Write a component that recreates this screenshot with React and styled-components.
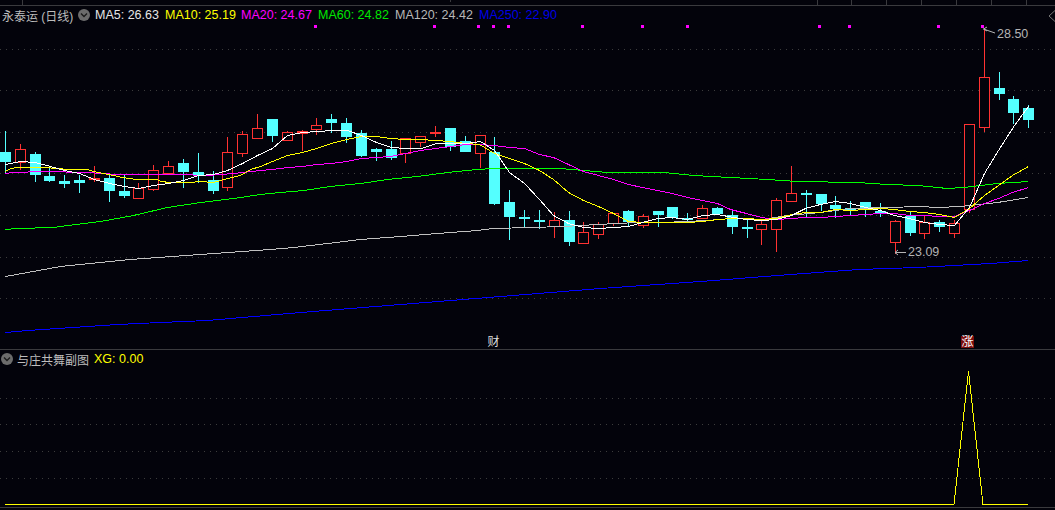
import React from "react";
import styled, { createGlobalStyle } from "styled-components";

const Global = createGlobalStyle`
  html, body { margin: 0; padding: 0; background: #03030b; overflow: hidden; }
`;

const UI_FONT = `"Liberation Sans", "Noto Sans CJK SC", sans-serif`;

const Screen = styled.div`
  width: 1055px;
  height: 510px;
  display: flex;
  flex-direction: column;
  background: #03030b;
  font-family: ${UI_FONT};
  overflow: hidden;
`;

const TopStrip = styled.div`
  height: 5px;
  flex: none;
  display: flex;
  border-bottom: 1px solid #3a3a3e;
`;

const Tick = styled.span`
  width: 1px;
  height: ${(p) => p.$h}px;
  flex: none;
  margin-left: ${(p) => p.$gap}px;
  background: #3a3a3e;
`;

const Panel = styled.section`
  flex: none;
  height: ${(p) => p.$h}px;
  display: flex;
  flex-direction: column;
  position: relative;
`;

const SubPanel = styled(Panel)`
  border-top: 1px solid #3a3a3e;
  border-bottom: 1px solid #3a3a3e;
`;

const Legend = styled.div`
  flex: none;
  height: ${(p) => p.$h}px;
  display: flex;
  align-items: center;
  padding-left: ${(p) => p.$pad}px;
  font-size: 12.5px;
  white-space: nowrap;
`;

const Title = styled.span`
  color: #bdbdbd;
  width: ${(p) => p.$w}px;
  flex: none;
  font-size: 12px;
`;

const Chevron = styled.span`
  width: 12px;
  height: 12px;
  flex: none;
  border-radius: 50%;
  background: #6c6c6c;
  display: flex;
  align-items: center;
  justify-content: center;
  margin-right: ${(p) => p.$mr}px;
`;

const Indicator = styled.span`
  color: ${(p) => p.$c};
  width: ${(p) => p.$w}px;
  flex: none;
`;

const Chart = styled.svg`
  display: block;
  flex: 1;
  width: 1055px;
  min-height: 0;
`;

const Diamond = styled.svg`
  position: absolute;
  right: 0;
  top: 4px;
`;

const PriceTag = styled.span`
  position: absolute;
  left: ${(p) => p.$x}px;
  top: ${(p) => p.$y}px;
  color: #b4b4b4;
  font-size: 12.5px;
  line-height: 15px;
`;

const Marker = styled.span`
  position: absolute;
  left: ${(p) => p.$x}px;
  top: 330px;
  width: 13px;
  height: 12px;
  line-height: 12px;
  text-align: center;
  font-size: 12px;
  color: ${(p) => (p.$alert ? "#ffffff" : "#dcdcdc")};
  background: ${(p) => (p.$alert ? "#7c0d0d" : "transparent")};
`;

const CYAN = "#54ffff";
const RED = "#ff3232";

/* top, bottom, high, low, up */
const candles = [
  [152,162,131,173,0],[149,162,144,170,1],[154,175,152,182,0],[176,181,167,182,0],[181,184,175,188,0],
  [180,183,175,193,0],[178,180,166,182,1],[178,191,174,202,0],[191,196,174,198,0],[188,198,183,198,1],
  [170,189,165,191,1],[166,173,161,175,1],[163,172,159,188,0],[172,175,153,183,0],[180,191,171,194,0],
  [152,187,137,191,1],[134,153,131,157,1],[128,138,114,138,1],[119,136,119,142,0],[132,140,131,141,1],
  [131,134,130,151,1],[125,129,118,135,1],[119,123,114,133,0],[123,137,118,143,0],[133,156,130,157,0],
  [149,152,148,161,0],[149,158,141,160,0],[138,153,138,163,1],[136,142,136,147,1],[132,134,126,137,1],
  [128,147,128,151,0],[141,152,136,152,0],[135,153,135,168,1],[152,204,137,205,0],[202,217,190,240,0],
  [217,219,210,228,0],[220,221,210,229,0],[220,226,212,238,1],[220,242,211,246,0],[232,243,222,243,1],
  [224,234,222,239,1],[213,223,213,226,1],[211,222,210,227,0],[216,225,214,228,1],[211,215,211,227,0],
  [207,218,207,219,0],[218,219,213,221,0],[208,218,205,219,1],[208,214,207,214,0],[215,227,210,234,0],
  [227,228,220,238,0],[224,229,220,245,1],[200,229,198,252,1],[193,201,166,201,1],[193,194,190,217,0],
  [194,204,194,211,0],[205,209,196,218,0],[208,210,201,215,0],[202,210,202,217,0],[211,212,203,217,0],
  [221,242,220,254,1],[216,233,212,236,0],[222,233,215,239,1],[222,227,220,232,0],[223,233,220,238,1],
  [124,209,124,213,1],[77,127,28,132,1],[88,94,72,100,0],[99,113,96,124,0],[108,120,105,128,0],
];

const ma5 = "5,164 20,161 35,162 50,166 64,170 79,173 94,179 109,183 124,186 138,188 153,185 168,183 183,180 198,175 213,174 227,170 242,163 257,155 272,148 287,135 302,132 317,131 332,130 347,130 361,135 376,142 391,147 406,148 421,148 436,143 451,143 466,143 480,141 494,150 509,172 524,183 539,199 553,215 568,223 583,227 598,228 613,227 628,226 642,222 657,218 672,217 687,219 702,215 717,214 733,217 746,219 761,220 776,219 791,215 805,208 820,204 835,201 850,203 865,207 880,210 894,215 909,218 924,222 939,224 954,225 969,207 984,173 998,150 1014,125 1028,106";
const ma10 = "5,171 10,168 18,167 43,167 57,168 68,169 87,169 93,171 103,173 113,175 122,177 128,178 137,179 157,179 160,181 170,182 190,182 200,181 213,182 227,178 240,175 250,169 260,166 272,161 287,155 302,152 316,148 331,143 346,139 361,136 376,136 390,138 405,139 420,139 435,140 450,141 465,143 479,144 494,153 509,158 524,163 539,170 553,179 568,192 583,200 598,206 613,213 628,221 642,222 657,222 672,222 687,222 702,221 717,219 733,218 746,218 761,219 776,218 791,214 805,212 820,212 835,209 850,210 865,209 880,208 894,209 909,211 924,212 939,214 954,217 969,208 984,195 998,185 1012,175 1028,166";
const ma20 = "5,173 13,172 43,171 87,172 117,174 147,174 177,174 207,175 233,173 260,170 272,169 287,167 302,166 316,164 331,163 346,161 361,158 376,157 390,156 405,153 420,150 435,148 450,146 465,144 479,144 494,145 509,147 524,148 539,154 553,157 568,164 583,171 598,175 613,179 628,184 642,187 657,190 672,193 687,197 702,200 717,203 730,209 746,213 761,217 776,219 791,218 805,217 820,217 835,216 850,215 865,214 880,213 894,213 909,215 924,215 939,216 954,216 969,210 984,203 998,198 1012,192 1028,187";
const ma60 = "5,229 17,228 53,227 67,225 100,221 133,215 167,207 200,202 233,198 260,194 280,192 303,190 330,186 360,183 387,179 417,176 447,172 477,169 493,168 560,168 607,172 663,172 693,175 730,177 767,179 797,181 857,182 887,184 917,185 947,188 963,187 997,183 1028,181";
const ma120 = "5,276 60,266 130,259 200,254 270,249 293,247 327,243 360,239 400,236 437,233 477,230 493,228 530,227 563,226 597,224 637,222 663,222 707,220 730,218 763,219 787,215 820,212 850,208 887,207 920,206 937,207 960,206 997,202 1028,197";
const ma250 = "5,332 27,330 57,328 87,326 117,324 160,322 207,320 300,312 400,304 500,296 600,288 700,281 790,274 858,269 917,267 990,263 1028,260";

const mainGrid = [49, 90, 132, 173, 215, 257, 298];
const subGrid = [398, 424, 451, 478];
const dots = [315, 434, 478, 493, 508, 582, 642, 687, 819, 849, 938, 982];

const lines = [
  [ma120, "#c0c0c0"],
  [ma250, "#0000ff"],
  [ma60, "#00ff00"],
  [ma20, "#ff00ff"],
  [ma10, "#ffff00"],
  [ma5, "#ffffff"],
];

const indicators = [
  ["MA5: 26.63", "#e6e6e6", 70],
  ["MA10: 25.19", "#ffff00", 76],
  ["MA20: 24.67", "#ff00ff", 77],
  ["MA60: 24.82", "#00e800", 77],
  ["MA120: 24.42", "#b8b8b8", 84],
  ["MA250: 22.90", "#0000e6", 90],
];

/* gap before each tick, its height */
const ticks = [[22, 5], [427, 2], [366, 5], [33, 5], [34, 5], [34, 5], [34, 5], [34, 5], [34, 5]];

const ChevronIcon = () => (
  <svg width="8" height="6" viewBox="0 0 8 6" fill="none">
    <path d="M1 1.5 L4 4.5 L7 1.5" stroke="#1c1c1c" strokeWidth="1.4" />
  </svg>
);

const Candle = ({ d, i }) => {
  const [top, bottom, high, low, up] = d;
  const x = Math.round(5 + i * 14.83);
  const c = up ? RED : CYAN;
  return (
    <g shapeRendering="crispEdges">
      <line x1={x + 0.5} x2={x + 0.5} y1={high} y2={low} stroke={c} />
      {up && bottom - top > 3 ? (
        <rect x={x - 5 + 0.5} y={top + 0.5} width={10} height={bottom - top} fill="#03030b" stroke={c} />
      ) : (
        <rect x={x - 5} y={top} width={11} height={Math.max(bottom - top, 2)} fill={c} />
      )}
    </g>
  );
};

export default function App() {
  return (
    <Screen>
      <Global />
      <TopStrip>
        {ticks.map(([gap, h], k) => (
          <Tick key={k} $gap={gap} $h={h} />
        ))}
      </TopStrip>
      <Panel $h={343}>
        <Legend $h={18} $pad={2}>
          <Title $w={76}>永泰运 (日线)</Title>
          <Chevron $mr={5}>
            <ChevronIcon />
          </Chevron>
          {indicators.map(([t, c, w]) => (
            <Indicator key={t} $c={c} $w={w}>
              {t}
            </Indicator>
          ))}
        </Legend>
        <Chart viewBox="0 24 1055 325" preserveAspectRatio="none">
          {mainGrid.map((y) => (
            <line key={y} x1="0" x2="1055" y1={y + 0.5} y2={y + 0.5} stroke="#3c3c3c" strokeDasharray="1 5" />
          ))}
          {dots.map((x) => (
            <rect key={x} x={x - 1} y={25} width="3" height="3" fill="#ff00ff" />
          ))}
          {candles.map((d, i) => (
            <Candle key={i} d={d} i={i} />
          ))}
          <g transform="translate(0.5 0.5)">
            {lines.map(([pts, c]) => (
              <polyline key={c} points={pts} fill="none" stroke={c} strokeWidth="1" shapeRendering="crispEdges" />
            ))}
          </g>
          <path d="M983.5 29 L995 33 M983.5 29 L987 27 M983.5 29 L987 31" fill="none" stroke="#b4b4b4" />
          <path d="M895 252.5 L906 252.5 M895 252.5 L898 250 M895 252.5 L898 255" fill="none" stroke="#b4b4b4" />
        </Chart>
        <Diamond width="7" height="12" viewBox="0 0 7 12">
          <path d="M7 0.5 L1 6 L7 11.5" fill="none" stroke="#777" />
        </Diamond>
        <PriceTag $x={997} $y={21}>28.50</PriceTag>
        <PriceTag $x={908} $y={239}>23.09</PriceTag>
        <Marker $x={487}>财</Marker>
        <Marker $x={961} $alert>涨</Marker>
      </Panel>
      <SubPanel $h={157}>
        <Legend $h={18} $pad={1}>
          <Chevron $mr={4}>
            <ChevronIcon />
          </Chevron>
          <Title $w={77}>与庄共舞副图</Title>
          <Indicator $c="#ffff00" $w={60}>XG: 0.00</Indicator>
        </Legend>
        <Chart viewBox="0 368 1055 139" preserveAspectRatio="none">
          {subGrid.map((y) => (
            <line key={y} x1="0" x2="1055" y1={y + 0.5} y2={y + 0.5} stroke="#3c3c3c" strokeDasharray="1 5" />
          ))}
          <polyline
            points="5,504.5 954,504.5 968.5,371 983,504.5 1028,504.5"
            fill="none"
            stroke="#ffff00"
            shapeRendering="crispEdges"
          />
        </Chart>
      </SubPanel>
    </Screen>
  );
}
